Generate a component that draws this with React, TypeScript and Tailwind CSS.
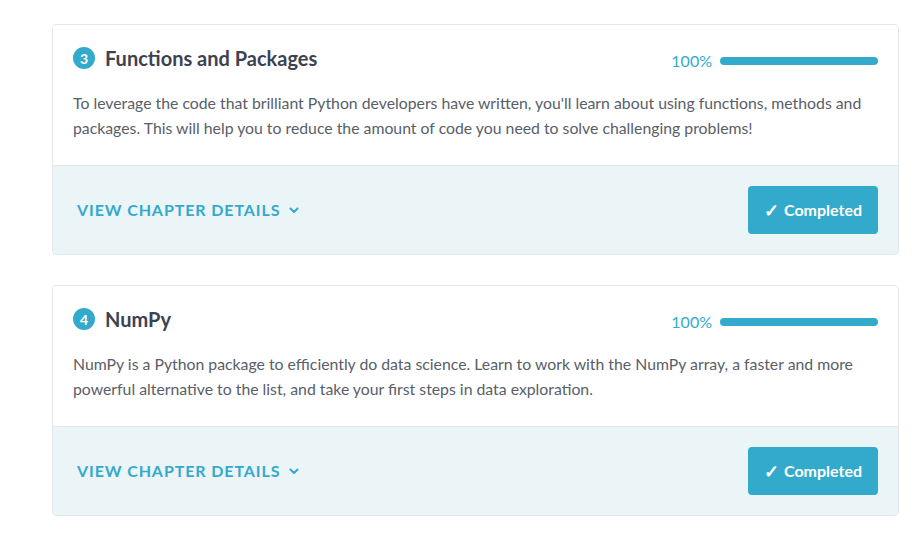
import React from "react";

const chapters = [
  {
    n: 3,
    title: "Functions and Packages",
    desc: "To leverage the code that brilliant Python developers have written, you'll learn about using functions, methods and packages. This will help you to reduce the amount of code you need to solve challenging problems!",
  },
  {
    n: 4,
    title: "NumPy",
    desc: "NumPy is a Python package to efficiently do data science. Learn to work with the NumPy array, a faster and more powerful alternative to the list, and take your first steps in data exploration.",
  },
];

function Chevron() {
  return (
    <svg width="10" height="7" viewBox="0 0 10 7" className="ml-[9px]">
      <path d="M1.5 1.5 L5 5 L8.5 1.5" fill="none" stroke="#33aacc" strokeWidth="2" strokeLinecap="round" strokeLinejoin="round" />
    </svg>
  );
}

function Card({ n, title, desc }: { n: number; title: string; desc: string }) {
  return (
    <div className="w-[847px] rounded-[4px] border border-[#e3e7ea] overflow-hidden">
      <div className="bg-white px-5 pt-[19px] pb-[25px]">
        <div className="flex items-center h-7">
          <div className="w-[22px] h-[22px] rounded-full bg-[#33aacc] text-white text-[14px] font-bold flex items-center justify-center">
            {n}
          </div>
          <div className="ml-[10px] text-[20px] font-bold text-[#3d4251] leading-7">{title}</div>
          <div className="ml-auto flex items-center mt-[5px]">
            <span className="text-[16px] text-[#33aacc]">100%</span>
            <div className="ml-[8px] w-[158px] h-2 rounded-full bg-[#33aacc]" />
          </div>
        </div>
        <p className="mt-[18px] text-[15.8px] leading-[25px] text-[#595e69]">{desc}</p>
      </div>
      <div className="bg-[#ebf4f7] border-t border-[#e3e7ea] h-[89px] pl-6 pr-5 flex items-center">
        <div className="flex items-center text-[16px] font-bold tracking-[0.9px] text-[#33aacc]">
          VIEW CHAPTER DETAILS
          <Chevron />
        </div>
        <button className="ml-auto w-[130px] h-[48px] rounded-[4px] bg-[#33aacc] text-white text-[16px] font-bold flex items-center justify-center">
          <span className="text-[18px] mr-[5px] leading-none">✓</span>Completed
        </button>
      </div>
    </div>
  );
}

export default function App() {
  return (
    <div className="w-[913px] h-[533px] bg-white pt-[24px] pl-[52px] flex flex-col gap-[30px]" style={{ fontFamily: "Lato, 'Open Sans', sans-serif" }}>
      {chapters.map((c) => (
        <Card key={c.n} {...c} />
      ))}
    </div>
  );
}
